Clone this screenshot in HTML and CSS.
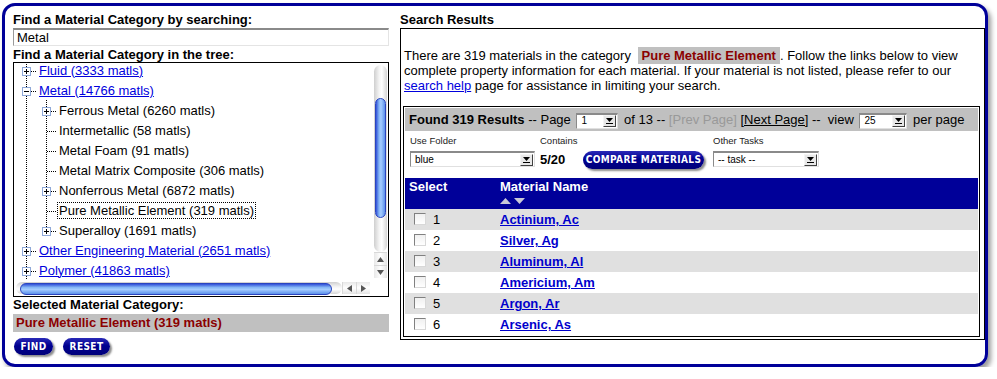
FILE: index.html
```html
<!DOCTYPE html>
<html lang="en">
<head>
  <meta charset="UTF-8">
  <title>Material Category Search</title>
  <link rel="stylesheet" href="styles.css">
</head>
<body>

<div class="frame">

  <!-- category finder -->
  <div class="finder">
    <h3>Find a Material Category by searching:</h3>
    <input type="text" class="search" value="Metal">

    <h3>Find a Material Category in the tree:</h3>
    <div class="tree">
      <div class="tree-view">
        <ul class="nodes">
          <li><div class="row"><svg class="tog" width="9" height="9"><rect x="0.5" y="0.5" width="8" height="8" fill="#fff" stroke="#8ea8d8"/><path d="M2 4.5h5M4.5 2v5" stroke="#000"/></svg><i class="dots"></i><a href="#">Fluid (3333 matls)</a></div></li>
          <li><div class="row"><svg class="tog" width="9" height="9"><rect x="0.5" y="0.5" width="8" height="8" fill="#fff" stroke="#8ea8d8"/><path d="M2 4.5h5" stroke="#000"/></svg><i class="dots"></i><a href="#">Metal (14766 matls)</a></div>
            <ul class="sub">
              <li><div class="row"><svg class="tog" width="9" height="9"><rect x="0.5" y="0.5" width="8" height="8" fill="#fff" stroke="#8ea8d8"/><path d="M2 4.5h5M4.5 2v5" stroke="#000"/></svg><i class="dots"></i>Ferrous Metal (6260 matls)</div></li>
              <li><div class="row leaf"><i class="dots"></i>Intermetallic (58 matls)</div></li>
              <li><div class="row leaf"><i class="dots"></i>Metal Foam (91 matls)</div></li>
              <li><div class="row leaf"><i class="dots"></i>Metal Matrix Composite (306 matls)</div></li>
              <li><div class="row"><svg class="tog" width="9" height="9"><rect x="0.5" y="0.5" width="8" height="8" fill="#fff" stroke="#8ea8d8"/><path d="M2 4.5h5M4.5 2v5" stroke="#000"/></svg><i class="dots"></i>Nonferrous Metal (6872 matls)</div></li>
              <li><div class="row leaf"><i class="dots"></i><span class="cur">Pure Metallic Element (319 matls)</span></div></li>
              <li><div class="row"><svg class="tog" width="9" height="9"><rect x="0.5" y="0.5" width="8" height="8" fill="#fff" stroke="#8ea8d8"/><path d="M2 4.5h5M4.5 2v5" stroke="#000"/></svg><i class="dots"></i>Superalloy (1691 matls)</div></li>
            </ul>
          </li>
          <li><div class="row"><svg class="tog" width="9" height="9"><rect x="0.5" y="0.5" width="8" height="8" fill="#fff" stroke="#8ea8d8"/><path d="M2 4.5h5M4.5 2v5" stroke="#000"/></svg><i class="dots"></i><a href="#">Other Engineering Material (2651 matls)</a></div></li>
          <li><div class="row"><svg class="tog" width="9" height="9"><rect x="0.5" y="0.5" width="8" height="8" fill="#fff" stroke="#8ea8d8"/><path d="M2 4.5h5M4.5 2v5" stroke="#000"/></svg><i class="dots"></i><a href="#">Polymer (41863 matls)</a></div></li>
        </ul>
      </div>

      <div class="vscroll">
        <div class="vtrack"><div class="vthumb"></div></div>
        <div class="sarrow"><svg width="7" height="5"><path d="M0 5L3.5 0L7 5z" fill="#555"/></svg></div>
        <div class="sarrow"><svg width="7" height="5"><path d="M0 0L7 0L3.5 5z" fill="#555"/></svg></div>
      </div>

      <div class="hscroll">
        <div class="htrack"><div class="hthumb"></div></div>
        <div class="sarrow"><svg width="5" height="7"><path d="M5 0L5 7L0 3.5z" fill="#555"/></svg></div>
        <div class="sarrow"><svg width="5" height="7"><path d="M0 0L5 3.5L0 7z" fill="#555"/></svg></div>
      </div>
      <div class="corner"></div>
    </div>

    <h3>Selected Material Category:</h3>
    <div class="selected">Pure Metallic Element (319 matls)</div>

    <div class="actions">
      <button class="pill find">FIND</button>
      <button class="pill reset">RESET</button>
    </div>
  </div>

  <!-- results -->
  <div class="results">
    <h3>Search Results</h3>
    <div class="results-box">
      <p class="intro">There are 319 materials in the category <span class="hl">Pure Metallic Element</span>. Follow the links below to view complete property information for each material. If your material is not listed, please refer to our <a href="#">search help</a> page for assistance in limiting your search.</p>

      <div class="rtable">
        <div class="pager">
          <b>Found 319 Results</b>&nbsp;-- Page
          <span class="sel sel-page"><span>1</span><span class="arr"><svg width="7" height="6"><path d="M0 0H7L3.5 4z" fill="#000"/><path d="M0 5.5H7" stroke="#000"/></svg></span></span>
          of 13 -- <span class="off">[Prev Page]</span> <a href="#" class="next">[Next Page]</a> -- &nbsp;view
          <span class="sel sel-view"><span>25</span><span class="arr"><svg width="7" height="6"><path d="M0 0H7L3.5 4z" fill="#000"/><path d="M0 5.5H7" stroke="#000"/></svg></span></span>
          per page
        </div>

        <div class="tools">
          <label>Use Folder</label>
          <label>Contains</label>
          <span></span>
          <label>Other Tasks</label>

          <span class="sel sel-folder"><span>blue</span><span class="arr"><svg width="7" height="6"><path d="M0 0H7L3.5 4z" fill="#000"/><path d="M0 5.5H7" stroke="#000"/></svg></span></span>
          <b class="count">5/20</b>
          <span><button class="pill compare">COMPARE MATERIALS</button></span>
          <span class="sel sel-task"><span>-- task --</span><span class="arr"><svg width="7" height="6"><path d="M0 0H7L3.5 4z" fill="#000"/><path d="M0 5.5H7" stroke="#000"/></svg></span></span>
        </div>

        <table class="list">
          <thead>
            <tr>
              <th class="c-sel">Select</th>
              <th class="c-name">Material Name
                <svg class="sort" width="26" height="7"><path d="M0 7L5.5 1L11 7z" fill="#c8c8d8"/><path d="M14 1H25L19.5 7z" fill="#c8c8d8"/></svg>
              </th>
            </tr>
          </thead>
          <tbody>
            <tr class="odd"><td class="c-sel"><span class="cb"></span>1</td><td class="c-name"><a href="#">Actinium, Ac</a></td></tr>
            <tr><td class="c-sel"><span class="cb"></span>2</td><td class="c-name"><a href="#">Silver, Ag</a></td></tr>
            <tr class="odd"><td class="c-sel"><span class="cb"></span>3</td><td class="c-name"><a href="#">Aluminum, Al</a></td></tr>
            <tr><td class="c-sel"><span class="cb"></span>4</td><td class="c-name"><a href="#">Americium, Am</a></td></tr>
            <tr class="odd"><td class="c-sel"><span class="cb"></span>5</td><td class="c-name"><a href="#">Argon, Ar</a></td></tr>
            <tr><td class="c-sel"><span class="cb"></span>6</td><td class="c-name"><a href="#">Arsenic, As</a></td></tr>
          </tbody>
        </table>
      </div>
    </div>
  </div>

</div>

</body>
</html>
```

FILE: styles.css
```css
body {
  margin: 0;
  font-family: "Liberation Sans", Arial, sans-serif;
  font-size: 13px;
  color: #000;
  background: #fff;
}

a {
  color: #0000dd;
}

h3 {
  margin: 0;
  font-size: 13px;
  line-height: 15px;
}

/* outer rounded frame */
.frame {
  box-sizing: border-box;
  width: 986px;
  height: 364px;
  margin: 3px 0 0 2px;
  padding: 6px 0 0 8px;
  border: 3px solid #000099;
  border-radius: 13px;
  box-shadow: 3px 4px 5px rgba(0,0,0,0.4);
  display: flex;
  gap: 11px;
}

/* left column */
.finder {
  width: 376px;
  flex: none;
}

.search {
  display: block;
  box-sizing: border-box;
  width: 376px;
  height: 18px;
  margin: 1px 0 1px;
  padding: 0 3px;
  border: 1px solid #e4e4e4;
  border-top: 2px solid #8a8a8a;
  border-left-color: #9a9a9a;
  font-family: inherit;
  font-size: 13px;
  outline: none;
}

.tree {
  box-sizing: border-box;
  width: 376px;
  height: 235px;
  border: 1px solid #000;
  display: grid;
  grid-template-columns: 359px 15px;
  grid-template-rows: 218px 15px;
  background: #fff;
}

.tree-view {
  overflow: hidden;
}

.nodes {
  list-style: none;
  margin: -3px 0 0;
  padding: 0;
  background: repeating-linear-gradient(to bottom, #000 0 1px, transparent 1px 2px) 12px 0 / 1px 100% no-repeat;
}

.sub {
  list-style: none;
  margin: 0;
  padding: 0;
  background: repeating-linear-gradient(to bottom, #000 0 1px, transparent 1px 2px) 32px 0 / 1px calc(100% - 10px) no-repeat;
}

.row {
  height: 20px;
  display: flex;
  align-items: center;
  padding-left: 8px;
  white-space: nowrap;
}

.sub .row {
  padding-left: 28px;
}

.tog {
  flex: none;
  display: block;
  margin-top: 3px;
}

.dots {
  flex: none;
  width: 5px;
  height: 1px;
  margin: 3px 3px 0 0;
  background: repeating-linear-gradient(to right, #000 0 1px, transparent 1px 2px);
}

.leaf .dots {
  width: 9px;
  margin-left: 5px;
}

.cur {
  outline: 1px dotted #000;
  padding: 0 1px;
  margin-left: -1px;
}

/* aqua style scrollbars */
.vscroll {
  display: flex;
  flex-direction: column;
  padding: 2px 1px 3px;
}

.vtrack {
  flex: 1;
  padding-top: 33px;
  border-radius: 7px;
  background: linear-gradient(to right, #cfcfcf, #f4f4f4 40%, #fff 60%, #d6d6d6);
}

.vthumb {
  height: 118px;
  margin: 0 1px;
  border: 1px solid #2a44c0;
  border-radius: 6px;
  background: linear-gradient(to right, #3050d8, #86b8f6 35%, #a4ccff 55%, #5c90ea);
}

.sarrow {
  flex: none;
  height: 12px;
  display: flex;
  align-items: center;
  justify-content: center;
  border-top: 1px solid #d8d8d8;
  background: linear-gradient(to right, #e8e8e8, #fff 50%, #e4e4e4);
}

.hscroll {
  display: flex;
  align-items: stretch;
  padding: 1px 0 2px 2px;
}

.htrack {
  width: 322px;
  padding-left: 4px;
  border-radius: 7px;
  background: linear-gradient(to bottom, #cfcfcf, #f4f4f4 40%, #fff 60%, #d6d6d6);
}

.hthumb {
  width: 310px;
  height: 10px;
  margin-top: 1px;
  border: 1px solid #2a44c0;
  border-radius: 6px;
  background: linear-gradient(to bottom, #3050d8, #86b8f6 35%, #a4ccff 55%, #5c90ea);
}

.hscroll .sarrow {
  width: 13px;
  height: auto;
  border-top: none;
  border-left: 1px solid #d8d8d8;
  background: linear-gradient(to bottom, #e8e8e8, #fff 50%, #e4e4e4);
}

.selected {
  margin-top: 2px;
  height: 18px;
  line-height: 18px;
  padding-left: 3px;
  background: #c0c0c0;
  color: #8b0000;
  font-weight: bold;
}

.actions {
  display: flex;
  gap: 10px;
  margin: 6px 0 0 1px;
}

/* navy pill buttons */
.pill {
  height: 17px;
  padding: 0;
  border: none;
  border-radius: 9px;
  background: linear-gradient(to bottom, #2a2ab8, #000090 45%, #00007a);
  color: #fff;
  font-family: "DejaVu Sans Condensed", "DejaVu Sans", sans-serif;
  font-weight: bold;
  font-size: 10px;
  letter-spacing: 0.4px;
  box-shadow: 2px 2px 2px rgba(0,0,0,0.45);
  cursor: pointer;
}

.find {
  width: 39px;
}

.reset {
  width: 47px;
}

.compare {
  width: 121px;
  height: 18px;
  margin-top: 1px;
}

/* right column */
.results {
  width: 585px;
  flex: none;
}

.results-box {
  margin-top: 1px;
  border: 1px solid #000;
  padding: 0 4px 2px 2px;
}

.intro {
  margin: 19px 0 13px 1px;
  line-height: 15px;
}

.hl {
  margin-left: 3px;
  padding: 1px 4px;
  background: #c0c0c0;
  color: #8b0000;
  font-weight: bold;
}

.rtable {
  border: 1px solid #000;
  padding: 1px;
}

.pager {
  height: 23px;
  line-height: 23px;
  padding-left: 4px;
  background: #c0c0c0;
  white-space: nowrap;
}

.off {
  color: #999;
}

.next {
  color: #000;
}

/* fake select boxes */
.sel {
  box-sizing: border-box;
  display: inline-flex;
  align-items: center;
  justify-content: space-between;
  height: 16px;
  padding-left: 4px;
  vertical-align: middle;
  border: 1px solid #e0e0e0;
  border-top: 2px solid #8a8a8a;
  border-left-color: #8a8a8a;
  background: #fff;
  font-size: 10px;
  line-height: 12px;
}

.sel .arr {
  box-sizing: border-box;
  width: 13px;
  height: 12px;
  margin-right: 1px;
  display: flex;
  align-items: center;
  justify-content: center;
  border: 1px solid;
  border-color: #f4f4f4 #404040 #404040 #f4f4f4;
  background: #e8e8e8;
}

.pager .sel {
  margin: 0 2px;
}

.sel-page {
  width: 42px;
}

.sel-view {
  width: 48px;
}

.sel-folder {
  width: 125px;
}

.sel-task {
  width: 106px;
}

.tools {
  display: grid;
  grid-template-columns: 130px 43px 130px auto;
  grid-template-rows: 11px 20px;
  row-gap: 3px;
  align-items: center;
  margin-top: 4px;
  padding-left: 5px;
}

.tools label {
  font-size: 9.5px;
  line-height: 11px;
  color: #222;
}

.count {
  font-size: 13px;
}

.list {
  width: 100%;
  margin-top: 9px;
  border-collapse: collapse;
}

.list th {
  height: 30px;
  padding: 1px 0 0;
  vertical-align: top;
  text-align: left;
  line-height: 15px;
  background: #000099;
  color: #fff;
}

.list th.c-sel {
  width: 91px;
  padding-left: 4px;
}

.sort {
  display: block;
  margin-top: 3px;
}

.list td {
  height: 21px;
  padding: 0;
}

.list td.c-sel {
  padding-left: 9px;
}

.list tr.odd td {
  background: #e0e0e0;
}

.list td a {
  color: #0000cc;
  font-weight: bold;
}

.cb {
  box-sizing: border-box;
  display: inline-block;
  width: 12px;
  height: 12px;
  margin-right: 7px;
  vertical-align: -1px;
  border: 1px solid;
  border-color: #808080 #d8d8d8 #d8d8d8 #808080;
  background: linear-gradient(to bottom, #f0f0f0, #fff);
}
```
